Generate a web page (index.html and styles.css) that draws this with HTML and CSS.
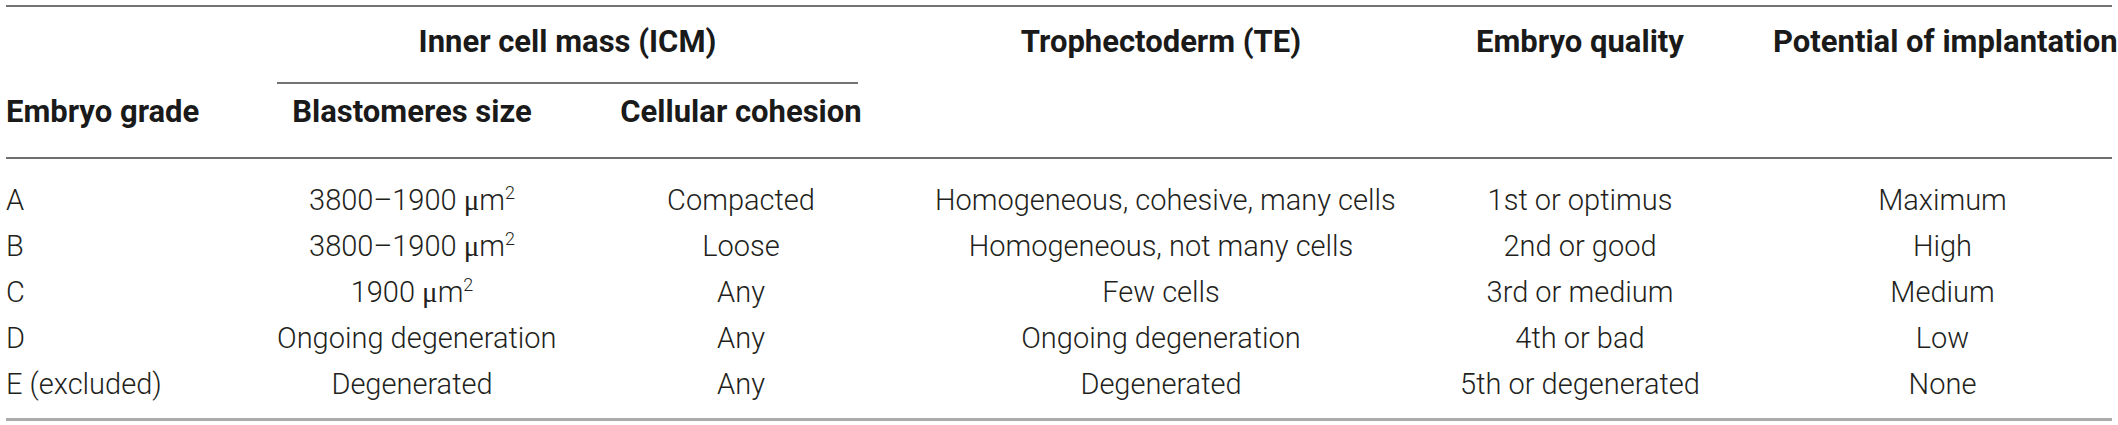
FILE: index.html
```html
<!DOCTYPE html>
<html>
<head>
<meta charset="utf-8">
<link rel="stylesheet" href="styles.css">
</head>
<body>
<table class="grid">
  <colgroup>
    <col class="c1"><col class="c2"><col class="c3"><col class="c4"><col class="c5"><col class="c6">
  </colgroup>
  <thead>
    <tr class="h1">
      <th class="blank"></th>
      <th class="group" colspan="2"><div class="group-label">Inner cell mass (ICM)</div></th>
      <th class="tall" rowspan="2">Trophectoderm (TE)</th>
      <th class="tall" rowspan="2">Embryo quality</th>
      <th class="tall" rowspan="2">Potential of implantation</th>
    </tr>
    <tr class="h2">
      <th class="left">Embryo grade</th>
      <th>Blastomeres size</th>
      <th>Cellular cohesion</th>
    </tr>
  </thead>
  <tbody>
    <tr class="first">
      <td class="left">A</td>
      <td>3800–1900 <span class="mu">μ</span>m<sup>2</sup></td>
      <td>Compacted</td>
      <td>Homogeneous, cohesive, many cells</td>
      <td>1st or optimus</td>
      <td>Maximum</td>
    </tr>
    <tr>
      <td class="left">B</td>
      <td>3800–1900 <span class="mu">μ</span>m<sup>2</sup></td>
      <td>Loose</td>
      <td>Homogeneous, not many cells</td>
      <td>2nd or good</td>
      <td>High</td>
    </tr>
    <tr>
      <td class="left">C</td>
      <td>1900 <span class="mu">μ</span>m<sup>2</sup></td>
      <td>Any</td>
      <td>Few cells</td>
      <td>3rd or medium</td>
      <td>Medium</td>
    </tr>
    <tr>
      <td class="left">D</td>
      <td>Ongoing degeneration</td>
      <td>Any</td>
      <td>Ongoing degeneration</td>
      <td>4th or bad</td>
      <td>Low</td>
    </tr>
    <tr class="last">
      <td class="left">E (excluded)</td>
      <td>Degenerated</td>
      <td>Any</td>
      <td>Degenerated</td>
      <td>5th or degenerated</td>
      <td>None</td>
    </tr>
  </tbody>
</table>
</body>
</html>
```
FILE: styles.css
```css
html, body {
  margin: 0;
  padding: 0;
  background: #ffffff;
}

body {
  padding: 5px 0 0 6px;
}

.grid {
  border-collapse: separate;
  border-spacing: 0;
  table-layout: fixed;
  width: 2106px;
  font-family: Roboto, "Liberation Sans", sans-serif;
  font-weight: 300;
  font-size: 29px;
  color: #231f20;
  border-top: 2px solid #737373;
  border-bottom: 3px solid #ababab;
}

.c1 { width: 271px; }
.c2 { width: 270px; }
.c3 { width: 388px; }
.c4 { width: 452px; }
.c5 { width: 386px; }
.c6 { width: 339px; }

th, td {
  padding: 0;
  text-align: center;
  white-space: nowrap;
}

th {
  font-family: Roboto, "Liberation Sans", sans-serif;
  font-weight: 700;
  font-size: 31px;
  line-height: 36px;
  color: #1a1a1a;
}

.left {
  text-align: left;
}

.h1 th {
  vertical-align: top;
}

.h1 th.tall {
  padding-top: 17px;
  border-bottom: 2px solid #6e6e6e;
}

.h1 th.group {
  padding-right: 77px;
}

.group-label {
  padding: 17px 0 22px;
  border-bottom: 2px solid #737373;
}

.h2 th {
  vertical-align: top;
  padding: 10px 0 27px;
  border-bottom: 2px solid #6e6e6e;
}

td {
  height: 46px;
  line-height: 46px;
  vertical-align: middle;
}

tr.first td {
  padding-top: 18px;
}

tr.last td {
  padding-bottom: 11px;
}

sup {
  font-size: 62%;
  line-height: 0;
  vertical-align: 0.62em;
}

.mu {
  font-family: "Liberation Serif", serif;
}
```
